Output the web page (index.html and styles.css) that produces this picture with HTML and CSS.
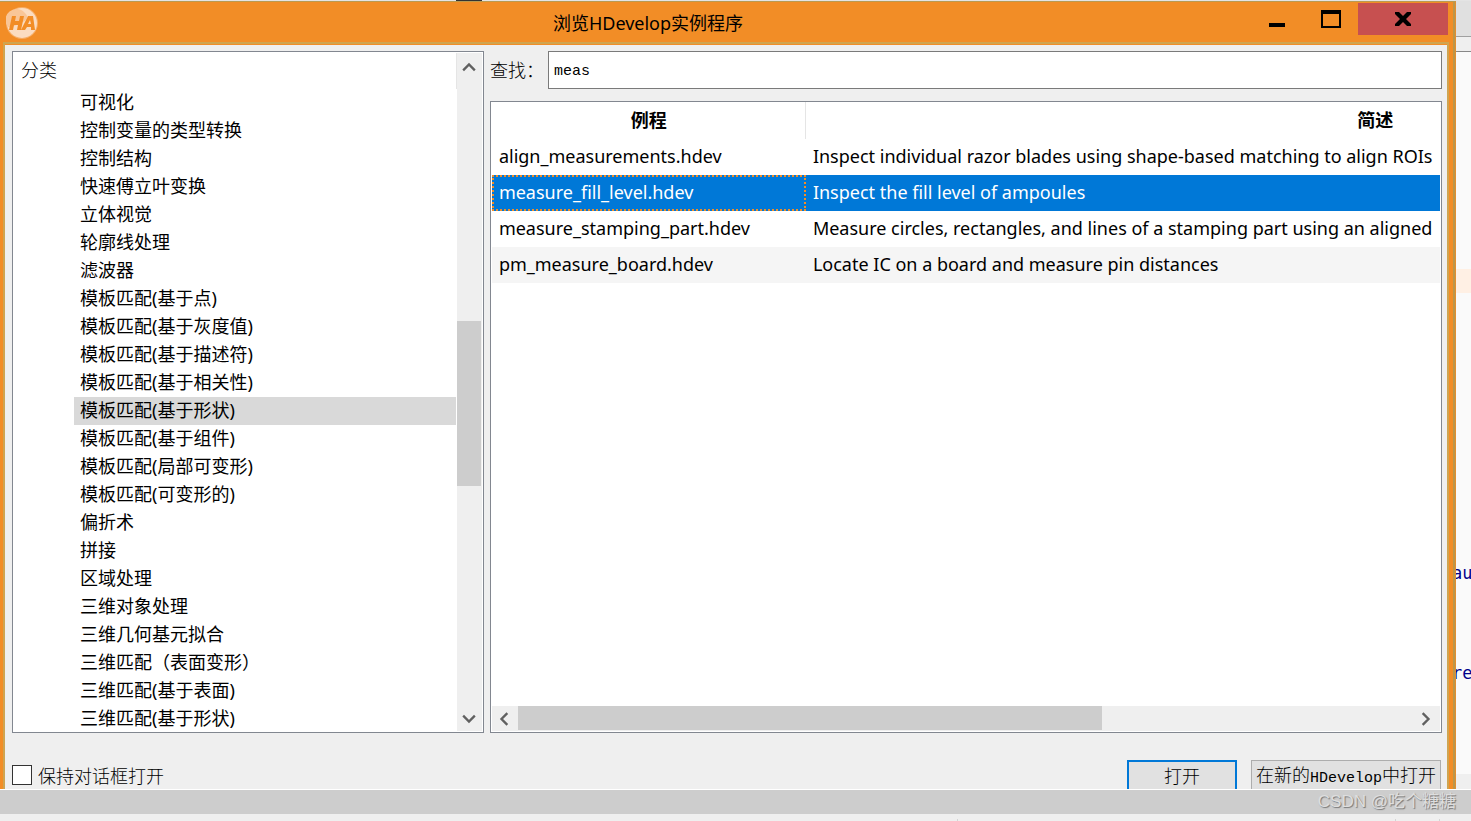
FILE: index.html
```html
<!DOCTYPE html>
<html lang="zh-CN">
<head>
<meta charset="utf-8">
<title>浏览HDevelop实例程序</title>
<link rel="stylesheet" href="styles.css">
</head>
<body>
<div class="screen">
  <div class="toolbar-edge"><span class="edge-mark"></span></div>
  <div class="workspace">
    <main class="dialog">
      <header class="titlebar">
        <svg class="logo" viewBox="0 0 32 32" aria-hidden="true">
          <circle cx="16" cy="16" r="16" fill="#f6ad66"/>
          <circle cx="16" cy="16" r="15" fill="#fbdcc0"/>
          <path d="M2 20A11 11 0 0 1 19 6q6 5-4 10T2 20z" fill="#f9c697"/>
          <path d="M6 9h4l-1 5h4l1-5h4l-3 14h-4l1-5H8l-1 5H3zM22 9h5l2 14h-4v-3h-4l-2 3h-4zM24 13l-2 4h3z" fill="#f28d26" fill-rule="evenodd"/>
        </svg>
        <h1 class="title">浏览HDevelop实例程序</h1>
        <div class="window-buttons">
          <button class="win-btn" type="button" aria-label="最小化"><svg viewBox="0 0 20 20"><path d="M2 14h16v4H2z"/></svg></button>
          <button class="win-btn" type="button" aria-label="最大化"><svg viewBox="0 0 20 20"><path d="M0 1h20v18H0zM2 5v12h16V5z" fill-rule="evenodd"/></svg></button>
          <button class="win-btn close" type="button" aria-label="关闭"><svg viewBox="0 0 20 20"><path d="M2 3h4l4 4 4-4h4v2l-5 5 5 5v2h-4l-4-4-4 4H2v-2l5-5-5-5z"/></svg></button>
        </div>
      </header>
      <div class="content">
        <div class="panes">
          <section class="tree">
            <div class="tree-body">
              <h2 class="tree-head">分类</h2>
              <ul class="tree-list">
                <li>可视化</li>
                <li>控制变量的类型转换</li>
                <li>控制结构</li>
                <li>快速傅立叶变换</li>
                <li>立体视觉</li>
                <li>轮廓线处理</li>
                <li>滤波器</li>
                <li>模板匹配(基于点)</li>
                <li>模板匹配(基于灰度值)</li>
                <li>模板匹配(基于描述符)</li>
                <li>模板匹配(基于相关性)</li>
                <li class="current">模板匹配(基于形状)</li>
                <li>模板匹配(基于组件)</li>
                <li>模板匹配(局部可变形)</li>
                <li>模板匹配(可变形的)</li>
                <li>偏折术</li>
                <li>拼接</li>
                <li>区域处理</li>
                <li>三维对象处理</li>
                <li>三维几何基元拟合</li>
                <li>三维匹配（表面变形）</li>
                <li>三维匹配(基于表面)</li>
                <li>三维匹配(基于形状)</li>
              </ul>
            </div>
            <div class="vscroll">
              <svg class="arrow" viewBox="0 0 12 12"><path d="M1 8l5-5 5 5"/></svg>
              <div class="vtrack"><div class="vthumb"></div></div>
              <svg class="arrow" viewBox="0 0 12 12"><path d="M1 4l5 5 5-5"/></svg>
            </div>
          </section>
          <section class="results">
            <div class="search">
              <label for="find">查找：</label>
              <input id="find" type="text" value="meas">
            </div>
            <div class="grid">
              <div class="grid-view">
                <table>
                  <colgroup><col class="col-name"><col class="col-desc"></colgroup>
                  <thead><tr><th>例程</th><th>简述</th></tr></thead>
                  <tbody>
                    <tr><td>align_measurements.hdev</td><td>Inspect individual razor blades using shape-based matching to align ROIs</td></tr>
                    <tr class="picked"><td>measure_fill_level.hdev</td><td>Inspect the fill level of ampoules</td></tr>
                    <tr><td>measure_stamping_part.hdev</td><td>Measure circles, rectangles, and lines of a stamping part using an aligned</td></tr>
                    <tr class="alt"><td>pm_measure_board.hdev</td><td>Locate IC on a board and measure pin distances</td></tr>
                  </tbody>
                </table>
              </div>
              <div class="hscroll">
                <svg class="arrow" viewBox="0 0 12 12"><path d="M8 1L3 6l5 5"/></svg>
                <div class="htrack"><div class="hthumb"></div></div>
                <svg class="arrow" viewBox="0 0 12 12"><path d="M4 1l5 5-5 5"/></svg>
              </div>
            </div>
          </section>
        </div>
        <footer class="actions">
          <label class="keep"><input type="checkbox">保持对话框打开</label>
          <button class="btn primary" type="button">打开</button>
          <button class="btn" type="button">在新的<span class="mono">HDevelop</span>中打开</button>
        </footer>
      </div>
    </main>
    <aside class="editor">
      <div class="editor-tab"></div>
      <div class="editor-bar"></div>
      <div class="editor-code">
        <div class="code-mark"></div>
        <code class="code-first">au</code>
        <code class="code-second">re</code>
      </div>
      <div class="editor-foot"></div>
    </aside>
  </div>
  <div class="page-scroll"><span class="watermark">CSDN @吃个糖糖</span></div>
  <div class="status"><span class="cell wide"></span><span class="cell grow"></span><span class="cell"></span></div>
</div>
</body>
</html>
```
FILE: styles.css
```css
* { box-sizing: border-box; }
body {
  margin: 0;
  font-family: "Noto Sans", "Noto Sans CJK SC", sans-serif;
  font-size: 18px;
  color: #000;
}
.screen {
  display: flex;
  flex-direction: column;
  height: 100vh;
  overflow: hidden;
  background: #efefef;
}
.toolbar-edge { height: 1px; flex: none; background: #e4e4e4; }
.edge-mark { display: block; width: 26px; height: 1px; margin-left: 456px; background: #333; }
.workspace { display: flex; flex: 1; min-height: 0; }

.dialog {
  display: flex;
  flex-direction: column;
  flex: 1;
  min-width: 0;
  background: #f28d26;
  border-top: 1px solid #bb9a50;
  border-right: 1px solid #e38e2e;
  box-shadow: inset -2px 0 #bb964a;
}
.titlebar {
  display: flex;
  flex: none;
  height: 40px;
  padding: 1px 7px 0 6px;
}
.logo { width: 32px; height: 32px; margin-top: 4px; }
.title {
  flex: 1;
  margin: 0;
  padding-left: 8px;
  font-size: 18px;
  font-weight: 400;
  line-height: 40px;
  text-align: center;
}
.window-buttons { display: flex; height: 32px; }
.win-btn {
  display: flex;
  align-items: center;
  justify-content: center;
  width: 54px;
  padding: 0;
  border: 0;
  background: none;
}
.win-btn svg { width: 20px; height: 20px; }
.close { width: 90px; background: #c75050; }

.content {
  display: flex;
  flex-direction: column;
  flex: 1;
  min-height: 0;
  margin: 0 6px 0 3px;
  padding: 7px 5px 0 7px;
  background: #efefef;
  border: solid #cfa450;
  border-width: 2px 2px 0;
  box-shadow: inset 0 1px #f28d26;
}
.panes { display: flex; flex: 1; gap: 6px; min-height: 0; }
.tree {
  display: flex;
  width: 33%;
  padding: 1px 1px 1px 0;
  background: #fff;
  border: 1px solid #828790;
}
.tree-body { flex: 1; overflow: hidden; }
.tree-head {
  height: 36px;
  margin: 0;
  padding-left: 8px;
  border-right: 1px solid #e5e5e5;
  font-family: "Noto Sans CJK SC", sans-serif;
  font-size: 18px;
  font-weight: 300;
  line-height: 32px;
}
.tree-list { margin: 0; padding: 0 1px 0 61px; list-style: none; }
.tree-list li { height: 28px; padding-left: 6px; line-height: 26px; white-space: nowrap; }
.current { background: #d9d9d9; }
.vscroll {
  display: flex;
  flex-direction: column;
  align-items: center;
  width: 25px;
  padding: 8px 0 6px;
  background: #efefef;
}
.arrow { flex: none; width: 14px; height: 14px; fill: none; stroke: #606060; stroke-width: 2; }
.vtrack { flex: 1; width: 100%; padding-right: 1px; }
.vthumb { height: 26%; margin-top: 246px; background: #cdcdcd; }

.results { display: flex; flex-direction: column; flex: 1; gap: 12px; min-width: 0; }
.search { display: flex; height: 38px; align-items: center; }
.search label {
  width: 58px;
  padding-bottom: 2px;
  white-space: nowrap;
  font-family: "Noto Sans CJK SC", sans-serif;
  font-weight: 300;
}
.search input {
  flex: 1;
  min-width: 0;
  height: 38px;
  padding: 2px 5px 0;
  border: 1px solid #7a7a7a;
  background: #fff;
  font-family: "Liberation Mono", monospace;
  font-size: 15px;
}
.grid {
  display: flex;
  flex-direction: column;
  flex: 1;
  min-height: 0;
  padding: 0 1px 1px;
  background: #fff;
  border: 1px solid #828790;
}
.grid-view { flex: 1; overflow: hidden; }
table { width: 1452px; table-layout: fixed; border-collapse: collapse; }
.col-name { width: 314px; }
th { height: 37px; padding: 0; font-weight: 700; line-height: 37px; }
th:first-child { border-right: 1px solid #e5e5e5; }
td { height: 36px; padding: 0 7px 2px; line-height: 34px; white-space: nowrap; overflow: hidden; }
.picked td { background: #0078d7; color: #fff; }
.picked td:first-child { outline: 2px dotted #f28d26; outline-offset: -2px; }
.alt td { background: #f5f5f5; }
.hscroll { display: flex; align-items: center; height: 25px; padding: 0 8px 0 6px; background: #efefef; }
.htrack { flex: 1; height: 25px; padding: 0 8px 1px 6px; }
.hthumb { width: 65.5%; height: 24px; background: #cdcdcd; }

.actions {
  display: flex;
  flex: none;
  height: 56px;
  padding: 27px 1px 0 0;
  overflow: hidden;
  font-family: "Noto Sans CJK SC", sans-serif;
  font-weight: 300;
}
.keep { display: flex; align-items: center; gap: 6px; height: 30px; margin-right: auto; line-height: 28px; }
.keep input {
  appearance: none;
  width: 20px;
  height: 20px;
  margin: 0;
  border: 1px solid #333;
  background: #fff;
}
.btn {
  flex: none;
  width: 190px;
  height: 34px;
  margin-left: 14px;
  padding: 0 0 4px;
  border: 1px solid #adadad;
  background: #e1e1e1;
  color: #000;
  font: inherit;
  font-size: 18px;
  line-height: 26px;
  white-space: nowrap;
}
.primary { width: 110px; border: 2px solid #0078d7; }
.mono { font-family: "Liberation Mono", monospace; font-size: 15px; font-weight: 400; }

.editor { display: flex; flex-direction: column; width: 15px; overflow: hidden; background: #fafafa; }
.editor-tab { height: 36px; background: #e0e0e0; border-bottom: 1px solid #a0a0a0; }
.editor-bar { height: 15px; background: #efefef; border-bottom: 1px solid #888; }
.editor-code { flex: 1; padding-top: 217px; }
.code-mark { height: 24px; background: #fff0e4; }
.editor-code code {
  display: block;
  margin-left: -4px;
  color: #00008b;
  font-family: "DejaVu Sans Mono", monospace;
  font-size: 17px;
  line-height: 24px;
}
.code-first { padding-top: 268px; }
.code-second { padding-top: 76px; }
.editor-foot { height: 15px; background: #efefef; }

.page-scroll {
  position: relative;
  flex: none;
  height: 25px;
  border-top: 1px solid #fff;
  background: #cdcdcd;
}
.watermark {
  position: absolute;
  right: 15px;
  top: 0;
  color: #dedede;
  font-family: "Liberation Sans", "Noto Sans CJK SC", sans-serif;
  font-size: 17px;
  line-height: 24px;
  text-shadow: 1px 1px 1px #777;
}
.status { display: flex; flex: none; height: 7px; padding: 5px 31px 0 0; }
.cell { width: 44px; border-right: 1px solid #d4d4d4; }
.wide { width: 958px; }
.grow { flex: 1; }
```
